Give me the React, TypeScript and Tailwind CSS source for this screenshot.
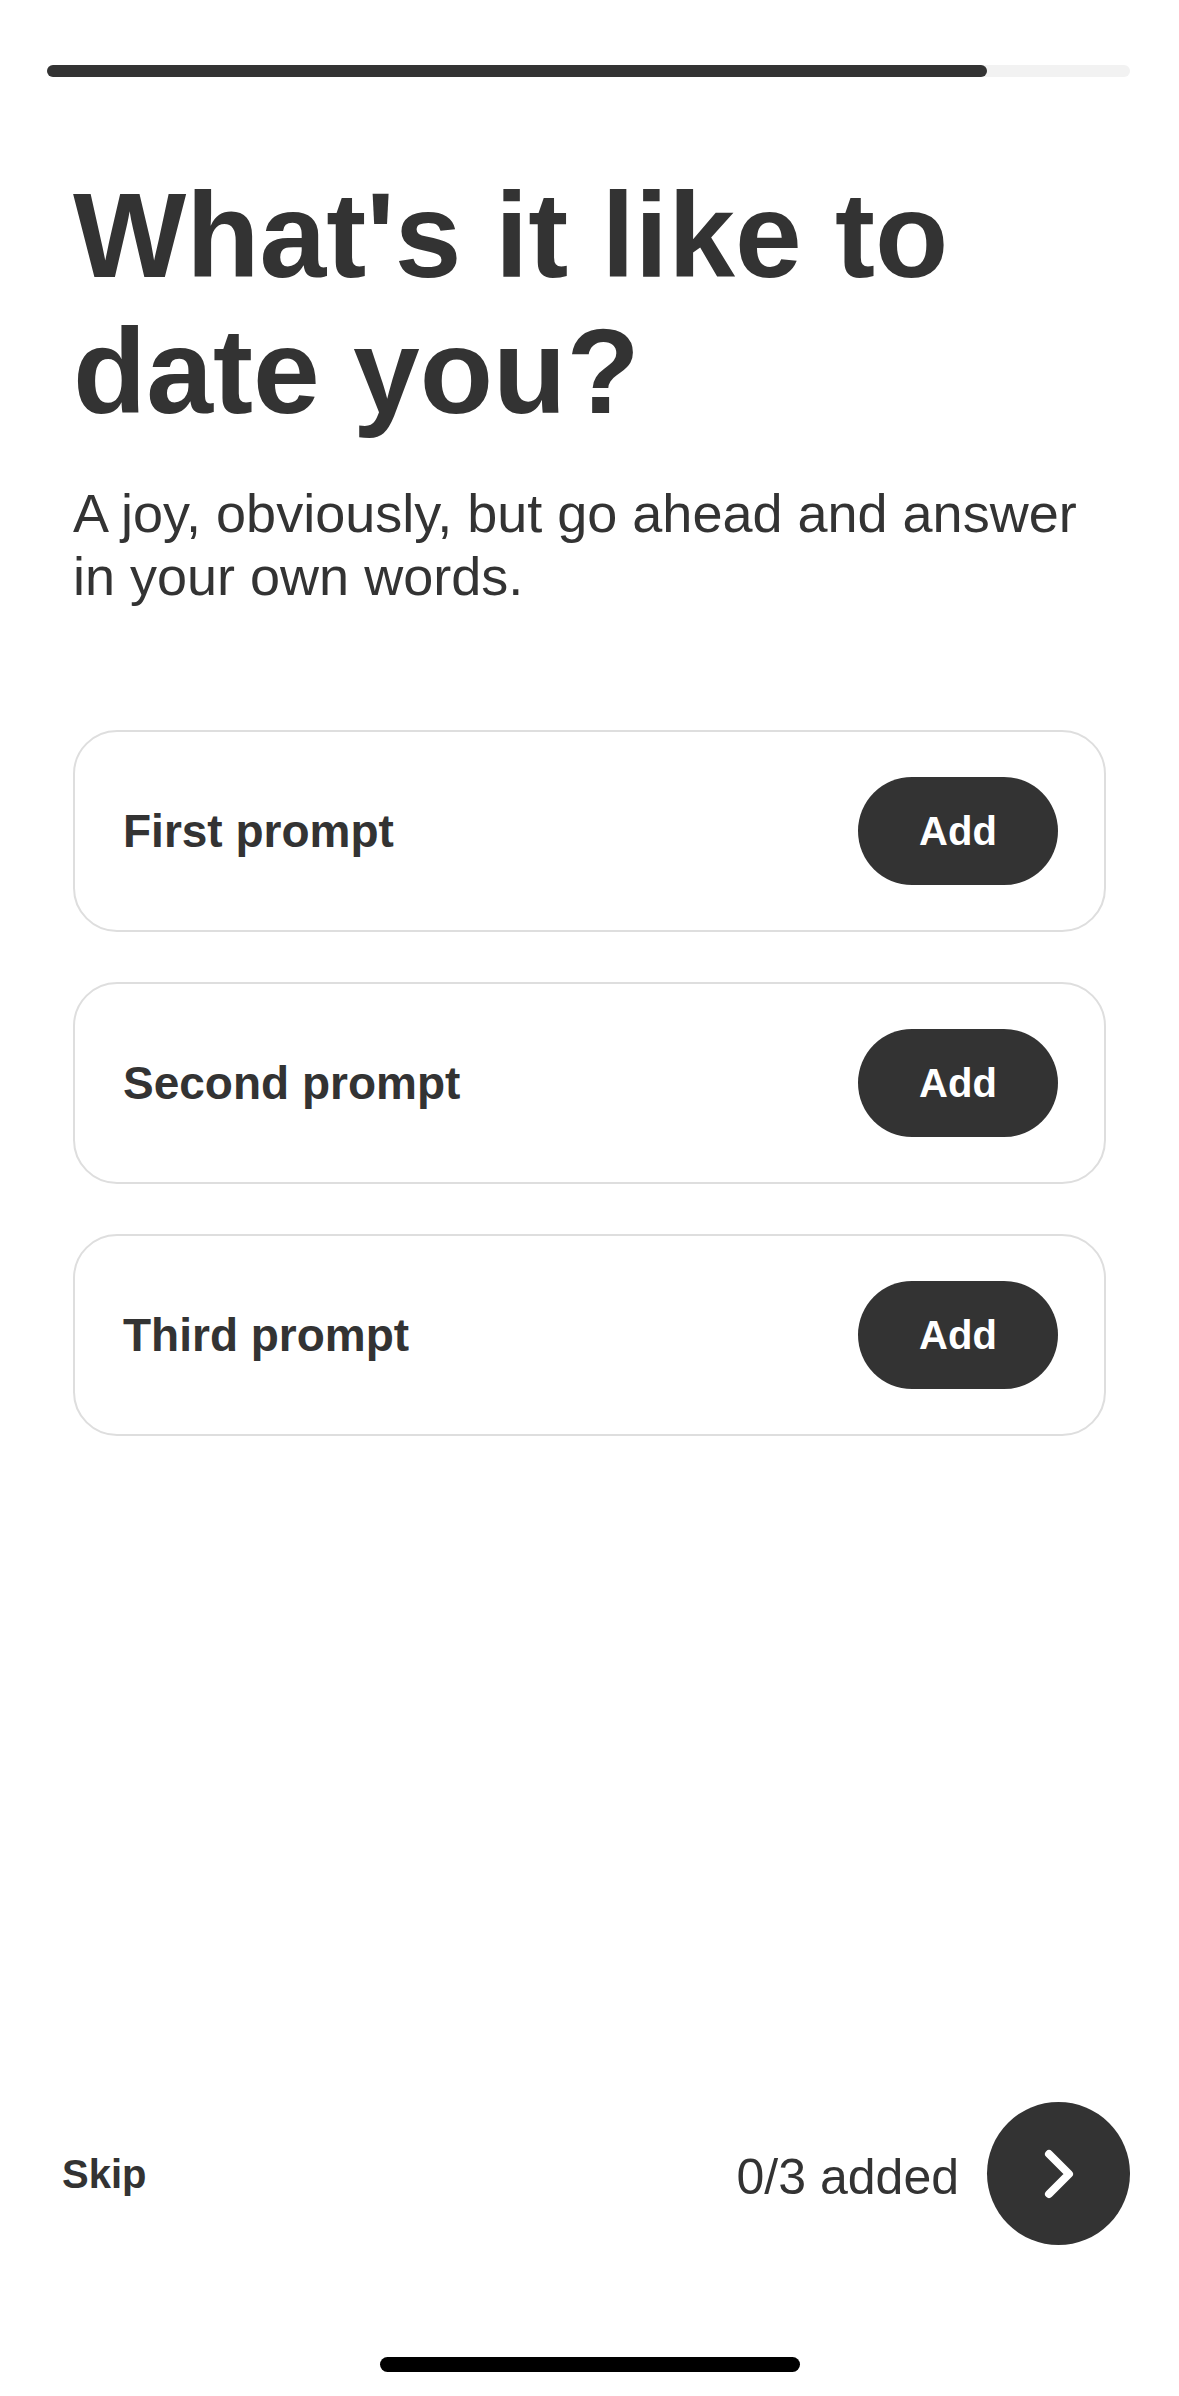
import React from "react";

const prompts = ["First prompt", "Second prompt", "Third prompt"];

export default function App() {
  return (
    <div className="w-[1179px] h-[2396px] bg-white flex flex-col text-[#333333] font-['Liberation_Sans',Arial,sans-serif]">
      {/* progress */}
      <div className="pt-[65px] pl-[47px] pr-[49px]">
        <div className="h-[12px] w-full rounded-full bg-[#f2f2f2] flex">
          <div className="h-full w-[940px] rounded-full bg-[#333333]" />
        </div>
      </div>

      <div className="px-[73px]">
        <h1 className="mt-[90px] text-[120px] leading-[136px] font-bold">
          What's it like to
          <br />
          date you?
        </h1>
        <p className="mt-[43px] text-[54px] leading-[63px] font-normal">
          A joy, obviously, but go ahead and answer
          <br />
          in your own words.
        </p>

        <div className="mt-[122px] flex flex-col gap-[50px]">
          {prompts.map((p) => (
            <div
              key={p}
              className="h-[202px] rounded-[44px] border-2 border-[#dedede] flex items-center justify-between pl-[48px] pr-[46px]"
            >
              <span className="text-[46px] font-bold">{p}</span>
              <button className="w-[200px] h-[108px] rounded-full bg-[#333333] text-white text-[40px] font-bold flex items-center justify-center">
                Add
              </button>
            </div>
          ))}
        </div>
      </div>

      <div className="flex-1" />

      <div className="h-[143px] flex items-center justify-between pl-[62px] pr-[49px]">
        <span className="text-[40px] font-bold">Skip</span>
        <div className="flex items-center gap-[28px]">
          <span className="text-[50px] font-normal mt-[8px]">0/3 added</span>
          <button className="w-[143px] h-[143px] rounded-full bg-[#333333] flex items-center justify-center">
            <svg width="38" height="54" viewBox="0 0 38 54" fill="none">
              <polyline
                points="9,7 29,27 9,47"
                stroke="white"
                strokeWidth="8"
                strokeLinecap="round"
                strokeLinejoin="round"
              />
            </svg>
          </button>
        </div>
      </div>

      <div className="mt-[112px] mb-[24px] mx-auto w-[420px] h-[15px] rounded-full bg-black" />
    </div>
  );
}
